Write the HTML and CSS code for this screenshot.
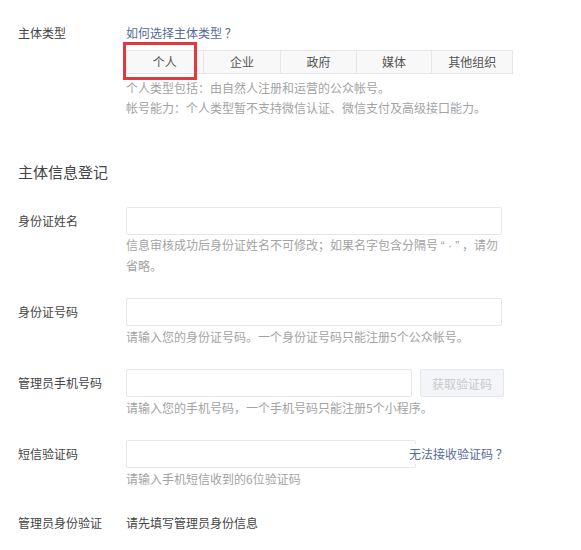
FILE: index.html
```html
<!DOCTYPE html>
<html>
    <head>
        <meta http-equiv="content-type" content="text/html; charset=UTF-8">
        <title>主体信息登记</title>
        <link rel="stylesheet" href="styles.css">
    </head>
    <body>
        <form class="page">
            <!-- 主体类型 -->
            <div class="row">
                <label class="lbl">主体类型</label>
                <div class="field">
                    <a class="link" href="#">如何选择主体类型 ？</a>
                    <ul class="tabs">
                        <li class="tab tab-on">个人</li>
                        <li class="tab">企业</li>
                        <li class="tab w76">政府</li>
                        <li class="tab w76">媒体</li>
                        <li class="tab w81">其他组织</li>
                    </ul>
                    <p class="desc">个人类型包括：由自然人注册和运营的公众帐号。<br>帐号能力：个人类型暂不支持微信认证、微信支付及高级接口能力。</p>
                </div>
            </div>

            <h2 class="title">主体信息登记</h2>

            <div class="row block first">
                <label class="lbl lbl-in">身份证姓名</label>
                <div class="field">
                    <input class="txt" type="text">
                    <p class="hint">信息审核成功后身份证姓名不可修改；如果名字包含分隔号 <span class="q">“ · ”</span> ，请勿<br>省略。</p>
                </div>
            </div>

            <div class="row block">
                <label class="lbl lbl-in">身份证号码</label>
                <div class="field">
                    <input class="txt" type="text">
                    <p class="hint">请输入您的身份证号码。一个身份证号码只能注册5个公众帐号。</p>
                </div>
            </div>

            <div class="row block">
                <label class="lbl lbl-in">管理员手机号码</label>
                <div class="field">
                    <div class="inline">
                        <input class="txt phone" type="text">
                        <button class="btn" type="button" disabled>获取验证码</button>
                    </div>
                    <p class="hint">请输入您的手机号码，一个手机号码只能注册5个小程序。</p>
                </div>
            </div>

            <div class="row block">
                <label class="lbl lbl-in">短信验证码</label>
                <div class="field">
                    <div class="inline">
                        <input class="txt sms" type="text">
                        <a class="link nocode" href="#">无法接收验证码 ？</a>
                    </div>
                    <p class="hint">请输入手机短信收到的6位验证码</p>
                </div>
            </div>

            <div class="row block last">
                <label class="lbl">管理员身份验证</label>
                <div class="field">
                    <span class="plain">请先填写管理员身份信息</span>
                </div>
            </div>
        </form>
    </body>
</html>
```

FILE: styles.css
```css
body {margin: 0; background: #fff; font-family: "Noto Sans CJK SC", "Microsoft YaHei", sans-serif; font-size: 12px; color: #444;}
.page {padding: 23px 0 0 18px;}
.row {display: flex; align-items: flex-start;}
.lbl {width: 108px; flex: none; line-height: 20px;}
.lbl-in {line-height: 28px;}
.field {flex: none; width: 376px;}
.link {color: #576b95; text-decoration: none; line-height: 20px;}
.row > .field > .link {display: block;}

.tabs {list-style: none; margin: 7px 0 0 0; padding: 0; display: flex; width: 387px;}
.tab {position: relative; width: 77px; height: 22px; line-height: 22px; text-align: center; background: #f8f8f8; border: 1px solid #e7e7eb; border-left: none; box-sizing: content-box; color: #555;}
.tab:first-child {border-left: 1px solid #e7e7eb; width: 76px;}
.w76 {width: 75px;}
.w81 {width: 80px;}
.tab-on::after {content: ""; position: absolute; left: -4px; top: -9px; width: 68px; height: 32px; border: 3px solid #e0393e;}

.desc {margin: 4px 0 0 0; line-height: 20px; color: #a3a3a3; width: 420px;}
.title {margin: 44px 0 0 0; font-size: 15px; font-weight: normal; line-height: 20px;}

.block {margin-top: 22px;}
.block.first {margin-top: 25px;}
.block.last {margin-top: 24px;}
.txt {display: block; box-sizing: border-box; width: 376px; height: 28px; margin: 0; border: 1px solid #e7e7eb; border-radius: 2px; padding: 0 8px; font: inherit; outline: none;}
.hint {margin: 0; line-height: 20px; color: #a3a3a3; white-space: nowrap;}
.block .hint {margin-top: 1px;}
.block.first .hint {margin-top: 0;}
.q {font-family: "Liberation Sans", sans-serif;}

.inline {display: flex; align-items: center; width: 420px;}
.phone {width: 286px;}
.btn {margin-left: 8px; width: 84px; height: 28px; padding: 0; background: #f4f5f9; border: 1px solid #e4e8eb; border-radius: 2px; color: #c9c9c9; font: inherit;}
.sms {width: 290px;}
.nocode {margin-left: -9px; background: #fff; padding: 0 2px;}
.plain {line-height: 20px;}
```
